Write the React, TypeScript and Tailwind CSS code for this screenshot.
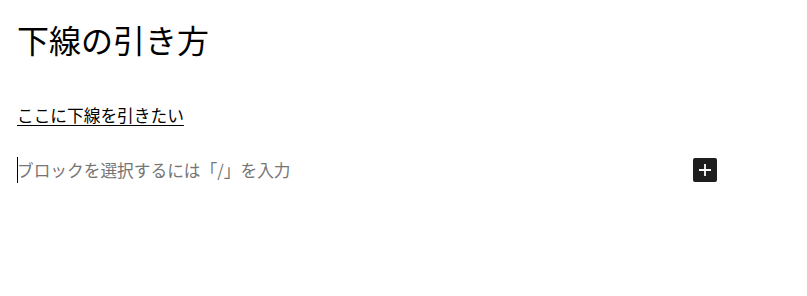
const font = { fontFamily: '"Noto Sans CJK JP", "Noto Sans", sans-serif' };

export default function App() {
  return (
    <div className="w-[807px] h-[296px] bg-white text-black" style={font}>
      <div className="pl-[17px] pr-[90px] pt-[17px]">
        <h1 className="text-[32px] leading-[44px] font-normal">下線の引き方</h1>

        <p className="mt-[42px] text-[16.7px] leading-[24px]">
          <span className="underline underline-offset-[3px] decoration-[1px]">ここに下線を引きたい</span>
        </p>

        <div className="mt-[31px] flex items-center justify-between">
          <div className="relative text-[16.7px] leading-[24px] text-[#757575]">
            <span className="absolute left-0 -top-[1px] w-px h-[26px] bg-black" />
            ブロックを選択するには「/」を入力
          </div>
          <button className="w-6 h-6 rounded-[2px] bg-[#1e1e1e] flex items-center justify-center">
            <svg width="14" height="14" viewBox="0 0 14 14" fill="none">
              <path d="M7 1v12M1 7h12" stroke="white" strokeWidth="1.8" />
            </svg>
          </button>
        </div>
      </div>
    </div>
  );
}
